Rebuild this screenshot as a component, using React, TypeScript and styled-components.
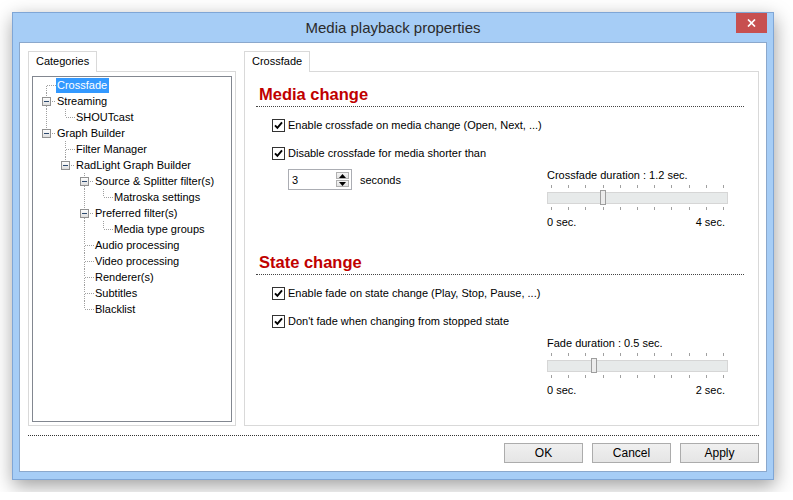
import React from 'react';
import styled, { createGlobalStyle } from 'styled-components';

const GlobalStyle = createGlobalStyle`
  html, body {
    margin: 0;
    padding: 0;
    background: #fff;
  }
  body {
    font-family: "Liberation Sans", Arial, sans-serif;
    font-size: 11px;
    color: #000;
  }
`;

type TreeNode = { label: string; children?: TreeNode[]; selected?: boolean };

const tree: TreeNode[] = [
  { label: 'Crossfade', selected: true },
  { label: 'Streaming', children: [{ label: 'SHOUTcast' }] },
  {
    label: 'Graph Builder',
    children: [
      { label: 'Filter Manager' },
      {
        label: 'RadLight Graph Builder',
        children: [
          { label: 'Source & Splitter filter(s)', children: [{ label: 'Matroska settings' }] },
          { label: 'Preferred filter(s)', children: [{ label: 'Media type groups' }] },
          { label: 'Audio processing' },
          { label: 'Video processing' },
          { label: 'Renderer(s)' },
          { label: 'Subtitles' },
          { label: 'Blacklist' },
        ],
      },
    ],
  },
];

type FlatRow = {
  label: string;
  guides: boolean[];
  first: boolean;
  last: boolean;
  root: boolean;
  hasChildren: boolean;
  selected: boolean;
};

function flatten(nodes: TreeNode[], guides: boolean[] = []): FlatRow[] {
  const out: FlatRow[] = [];
  nodes.forEach((n, i) => {
    const last = i === nodes.length - 1;
    out.push({
      label: n.label,
      guides,
      first: i === 0,
      last,
      root: guides.length === 0,
      hasChildren: !!n.children,
      selected: !!n.selected,
    });
    if (n.children) out.push(...flatten(n.children, [...guides, !last]));
  });
  return out;
}

const Desktop = styled.div`
  padding: 12px;
`;

const Window = styled.div`
  width: 762px;
  height: 468px;
  box-sizing: border-box;
  border: 1px solid #7fa6d6;
  background: #a6cdf6;
  padding: 0 6px 7px;
  display: flex;
  flex-direction: column;
  box-shadow: 1px 6px 18px rgba(0, 0, 0, 0.38);
`;

const TitleBar = styled.div`
  height: 29px;
  display: grid;
  grid-template-columns: 31px 1fr 31px;
  align-items: center;
`;

const Title = styled.div`
  grid-column: 2;
  text-align: center;
  font-size: 15px;
  line-height: 29px;
  color: #2b2b2b;
`;

const CloseButton = styled.div`
  grid-column: 3;
  align-self: start;
  width: 31px;
  height: 20px;
  background: #c75050;
  display: flex;
  align-items: center;
  justify-content: center;
`;

const Client = styled.div`
  flex: 1;
  background: #fff;
  border: 1px solid #8ba8cc;
  padding: 8px 7px 8px 8px;
  display: flex;
  flex-direction: column;
`;

const Body = styled.div`
  flex: 1;
  display: flex;
  gap: 8px;
`;

const TabGroup = styled.div<{ $width?: number }>`
  display: flex;
  flex-direction: column;
  ${({ $width }) => ($width ? `width: ${$width}px;` : 'flex: 1;')}
`;

const Tab = styled.div`
  align-self: flex-start;
  height: 21px;
  box-sizing: border-box;
  padding: 0 7px;
  line-height: 19px;
  border: 1px solid #d9d9d9;
  border-bottom: none;
  background: #fff;
  position: relative;
  z-index: 1;
  margin-bottom: -1px;
`;

const TabPanel = styled.div<{ $pad: string }>`
  flex: 1;
  border: 1px solid #d9d9d9;
  padding: ${({ $pad }) => $pad};
  display: flex;
  flex-direction: column;
`;

const TreeBox = styled.div`
  flex: 1;
  border: 1px solid #828790;
  padding-left: 4px;
`;

const TreeRow = styled.div`
  display: flex;
  height: 16px;
  align-items: center;
`;

const TreeCell = styled.svg`
  width: 19px;
  height: 16px;
  flex: none;
  display: block;
`;

const TreeLabel = styled.span<{ $selected?: boolean }>`
  padding: 0 2px 0 1px;
  line-height: 15px;
  white-space: nowrap;
  background: ${({ $selected }) => ($selected ? '#3399ff' : 'transparent')};
  color: ${({ $selected }) => ($selected ? '#fff' : '#000')};
`;

const DOT = { stroke: '#a0a0a0', strokeWidth: 1, strokeDasharray: '1 1', shapeRendering: 'crispEdges' as const };

function Guide({ on }: { on: boolean }) {
  return (
    <TreeCell viewBox="0 0 19 16">
      {on && <line x1="9.5" y1="0" x2="9.5" y2="16" {...DOT} />}
    </TreeCell>
  );
}

function Connector({ row }: { row: FlatRow }) {
  const top = !(row.root && row.first);
  const box = row.hasChildren;
  return (
    <TreeCell viewBox="0 0 19 16">
      {top && <line x1="9.5" y1="0" x2="9.5" y2={box ? 4 : 8} {...DOT} />}
      {!row.last && <line x1="9.5" y1={box ? 13 : 9} x2="9.5" y2="16" {...DOT} />}
      <line x1={box ? 15 : 10} y1="8.5" x2="19" y2="8.5" {...DOT} />
      {box && (
        <>
          <defs>
            <linearGradient id="tb" x1="0" y1="0" x2="0" y2="1">
              <stop offset="0" stopColor="#ffffff" />
              <stop offset="1" stopColor="#dcdcdc" />
            </linearGradient>
          </defs>
          <rect x="5.5" y="4.5" width="8" height="8" fill="url(#tb)" stroke="#919191" shapeRendering="crispEdges" />
          <line x1="7" y1="8.5" x2="12" y2="8.5" stroke="#2d4a6e" shapeRendering="crispEdges" />
        </>
      )}
    </TreeCell>
  );
}

function CategoryTree() {
  const rows = flatten(tree);
  return (
    <TreeBox>
      {rows.map((r) => (
        <TreeRow key={r.label}>
          {r.guides.map((g, i) => (
            <Guide key={i} on={g} />
          ))}
          <Connector row={r} />
          <TreeLabel $selected={r.selected}>{r.label}</TreeLabel>
        </TreeRow>
      ))}
    </TreeBox>
  );
}

const Heading = styled.div<{ $top: number }>`
  margin-top: ${({ $top }) => $top}px;
  padding: 0 0 2px 3px;
  line-height: 20px;
  font-size: 16.5px;
  font-weight: bold;
  color: #c00000;
  border-bottom: 1px dotted #444;
`;

const Options = styled.div`
  display: flex;
  flex-direction: column;
  padding: 10px 16px 0;
`;

const CheckRow = styled.label`
  display: flex;
  align-items: center;
  height: 16px;
  gap: 3px;

  & + & {
    margin-top: 12px;
  }
`;

const CheckBox = styled.span`
  width: 13px;
  height: 13px;
  box-sizing: border-box;
  border: 1px solid #333;
  background: #fff;
  display: flex;
  align-items: center;
  justify-content: center;
`;

function Check({ label }: { label: string }) {
  return (
    <CheckRow>
      <CheckBox>
        <svg width="11" height="11" viewBox="0 0 11 11">
          <path d="M2 5.3 L4.4 7.9 L9 2.4" stroke="#000" strokeWidth="1.9" fill="none" />
        </svg>
      </CheckBox>
      {label}
    </CheckRow>
  );
}

const ControlRow = styled.div<{ $end?: boolean }>`
  display: flex;
  align-items: flex-start;
  justify-content: ${({ $end }) => ($end ? 'flex-end' : 'space-between')};
  margin-top: 7px;
`;

const SpinGroup = styled.div`
  display: flex;
  align-items: center;
  gap: 8px;
  margin: 1px 0 0 16px;
`;

const SpinBox = styled.div`
  width: 64px;
  height: 21px;
  box-sizing: border-box;
  border: 1px solid #abadb3;
  display: flex;
  align-items: center;
  justify-content: space-between;
  padding: 0 2px 0 3px;
`;

const SpinButtons = styled.div`
  display: flex;
  flex-direction: column;
  gap: 1px;
`;

const SpinButton = styled.div`
  width: 13px;
  height: 7px;
  box-sizing: border-box;
  border: 1px solid #b0b0b0;
  background: linear-gradient(#f4f4f4, #e2e2e2);
  display: flex;
  align-items: center;
  justify-content: center;
`;

function Spin({ value }: { value: string }) {
  return (
    <SpinBox>
      {value}
      <SpinButtons>
        <SpinButton>
          <svg width="7" height="4" viewBox="0 0 7 4">
            <path d="M0 4 L3.5 0 L7 4 Z" fill="#000" />
          </svg>
        </SpinButton>
        <SpinButton>
          <svg width="7" height="4" viewBox="0 0 7 4">
            <path d="M0 0 L3.5 4 L7 0 Z" fill="#000" />
          </svg>
        </SpinButton>
      </SpinButtons>
    </SpinBox>
  );
}

const SliderBlock = styled.div`
  width: 181px;
  display: flex;
  flex-direction: column;
`;

const SliderLabel = styled.div`
  line-height: 14px;
`;

const Ticks = styled.div<{ $top: number }>`
  display: flex;
  justify-content: space-between;
  padding: 0 4px;
  margin-top: ${({ $top }) => $top}px;
`;

const Tick = styled.span`
  width: 1px;
  height: 3px;
  background: #a0a0a0;
`;

const TrackArea = styled.div`
  height: 15px;
  margin-top: 2px;
  position: relative;
  display: flex;
  align-items: center;
`;

const Track = styled.div`
  flex: 1;
  height: 12px;
  box-sizing: border-box;
  border: 1px solid #d6d6d6;
  background: #e7eaea;
`;

const Thumb = styled.div`
  position: absolute;
  top: 0;
  width: 6px;
  height: 15px;
  box-sizing: border-box;
  border: 1px solid #9e9e9e;
  background: #ececec;
`;

const Scale = styled.div`
  display: flex;
  justify-content: space-between;
  padding-right: 3px;
  margin-top: 5px;
  line-height: 14px;
`;

function Slider({ label, max, value }: { label: string; max: string; value: number }) {
  const ticks = Array.from({ length: 11 });
  return (
    <SliderBlock>
      <SliderLabel>{label}</SliderLabel>
      <Ticks $top={3}>
        {ticks.map((_, i) => (
          <Tick key={i} />
        ))}
      </Ticks>
      <TrackArea>
        <Track />
        <Thumb style={{ left: Math.round(4 + value * 173 - 3) }} />
      </TrackArea>
      <Ticks $top={2}>
        {ticks.map((_, i) => (
          <Tick key={i} />
        ))}
      </Ticks>
      <Scale>
        <span>0 sec.</span>
        <span>{max}</span>
      </Scale>
    </SliderBlock>
  );
}

const Footer = styled.div`
  margin-top: 9px;
  border-top: 1px dotted #333;
  padding-top: 7px;
  display: flex;
  justify-content: flex-end;
  gap: 9px;
`;

const Button = styled.button`
  width: 79px;
  height: 20px;
  box-sizing: border-box;
  border: 1px solid #acacac;
  background: linear-gradient(#f0f0f0, #e5e5e5);
  font-family: "Liberation Sans", Arial, sans-serif;
  font-size: 12px;
  color: #000;
  padding: 0;
`;

export default function App() {
  return (
    <>
      <GlobalStyle />
      <Desktop>
        <Window>
          <TitleBar>
            <Title>Media playback properties</Title>
            <CloseButton>
              <svg width="9" height="8" viewBox="0 0 9 8">
                <path d="M1 0.5 L8 7.5 M8 0.5 L1 7.5" stroke="#fff" strokeWidth="1.7" />
              </svg>
            </CloseButton>
          </TitleBar>
          <Client>
            <Body>
              <TabGroup $width={208}>
                <Tab>Categories</Tab>
                <TabPanel $pad="4px 3px 3px">
                  <CategoryTree />
                </TabPanel>
              </TabGroup>
              <TabGroup>
                <Tab>Crossfade</Tab>
                <TabPanel $pad="0 14px 0 11px">
                  <Heading $top={12}>Media change</Heading>
                  <Options>
                    <Check label="Enable crossfade on media change (Open, Next, ...)" />
                    <Check label="Disable crossfade for media shorter than" />
                    <ControlRow>
                      <SpinGroup>
                        <Spin value="3" />
                        seconds
                      </SpinGroup>
                      <Slider label="Crossfade duration : 1.2 sec." max="4 sec." value={1.2 / 4} />
                    </ControlRow>
                  </Options>
                  <Heading $top={23}>State change</Heading>
                  <Options>
                    <Check label="Enable fade on state change (Play, Stop, Pause, ...)" />
                    <Check label="Don't fade when changing from stopped state" />
                    <ControlRow $end>
                      <Slider label="Fade duration : 0.5 sec." max="2 sec." value={0.5 / 2} />
                    </ControlRow>
                  </Options>
                </TabPanel>
              </TabGroup>
            </Body>
            <Footer>
              <Button>OK</Button>
              <Button>Cancel</Button>
              <Button>Apply</Button>
            </Footer>
          </Client>
        </Window>
      </Desktop>
    </>
  );
}
